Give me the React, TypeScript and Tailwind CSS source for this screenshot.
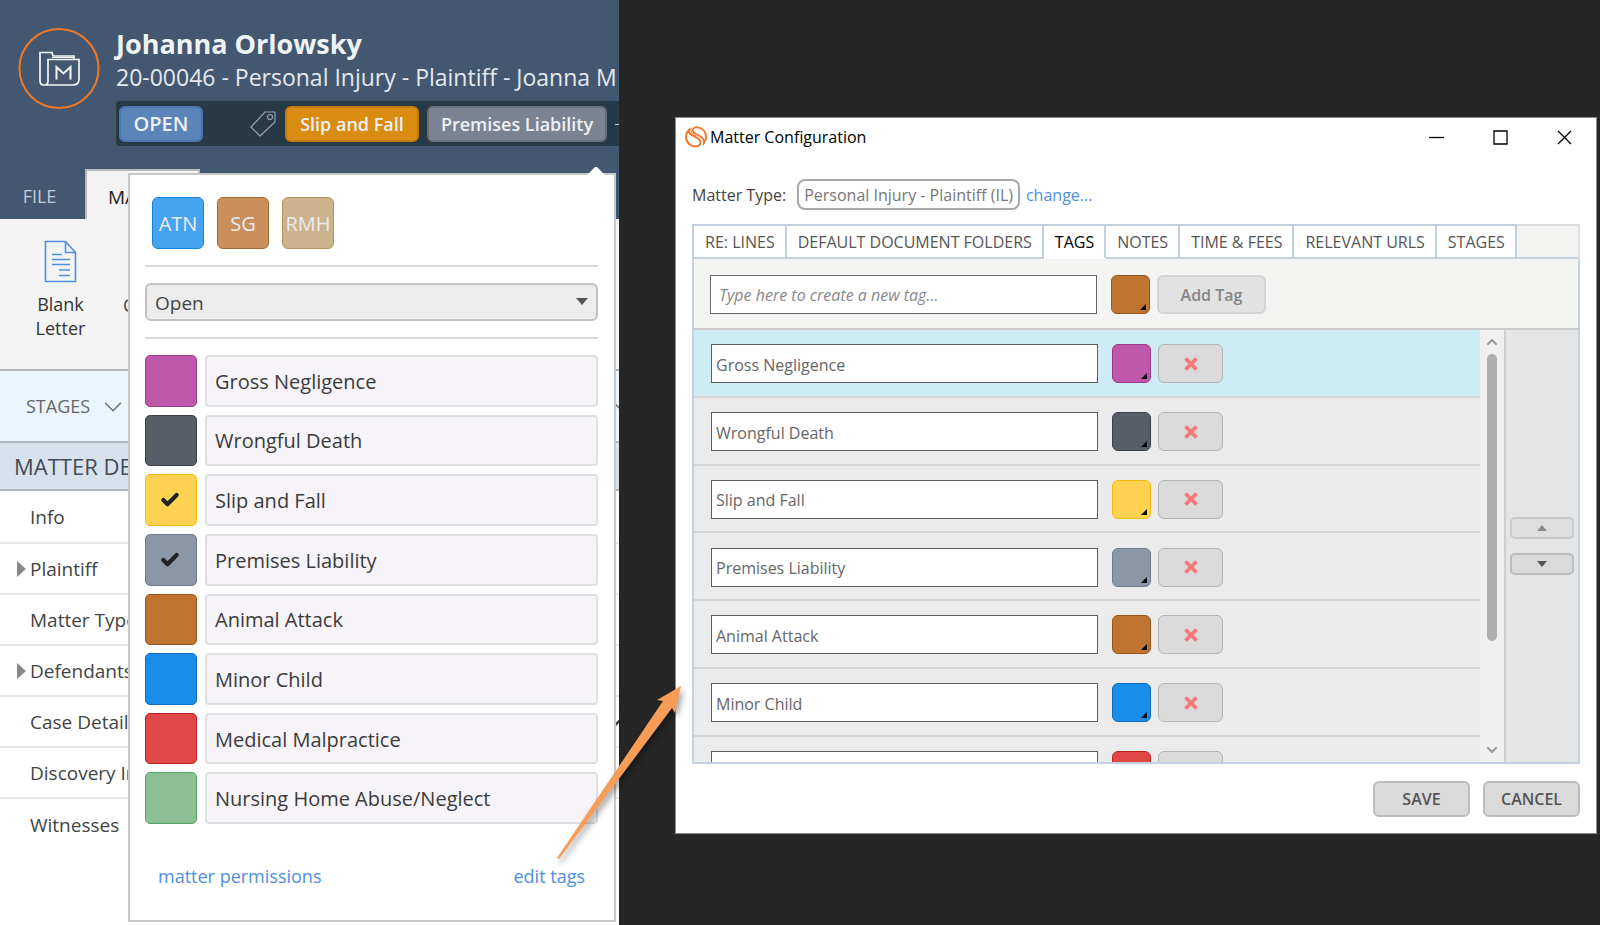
import { useState } from "react";
import { Check, ChevronDown, ChevronUp, X } from "lucide-react";
import clsx from "clsx";

interface Tag {
  name: string;
  swatch: string;
  outline: string;
  checked: boolean;
}

interface Detail {
  label: string;
  nested?: boolean;
  expanded?: boolean;
}

const initialTags: Tag[] = [
  { name: "Gross Negligence", swatch: "bg-[#bf57ab]", outline: "border-[#9c3a8a]", checked: false },
  { name: "Wrongful Death", swatch: "bg-[#575e68]", outline: "border-[#3c424b]", checked: false },
  { name: "Slip and Fall", swatch: "bg-[#ffd351]", outline: "border-[#f5b80c]", checked: true },
  { name: "Premises Liability", swatch: "bg-[#8b96a7]", outline: "border-[#6f7c90]", checked: true },
  { name: "Animal Attack", swatch: "bg-[#bf7432]", outline: "border-[#96551b]", checked: false },
  { name: "Minor Child", swatch: "bg-[#1a8de8]", outline: "border-[#0a6cbd]", checked: false },
  { name: "Medical Malpractice", swatch: "bg-[#e04848]", outline: "border-[#bb2222]", checked: false },
  { name: "Nursing Home Abuse/Neglect", swatch: "bg-[#8bbf94]", outline: "border-[#56a565]", checked: false },
];

const people = [
  { initials: "ATN", style: "bg-[#45a4f1] border-[#1783d8]" },
  { initials: "SG", style: "bg-[#cb8f5b] border-[#a9682f]" },
  { initials: "RMH", style: "bg-[#cdb38d] border-[#b5935a]" },
];

const details: Detail[] = [
  { label: "Info" },
  { label: "Plaintiff", nested: true },
  { label: "Matter Type" },
  { label: "Defendants", nested: true },
  { label: "Case Details", expanded: true },
  { label: "Discovery Info" },
  { label: "Witnesses" },
];

const tabs = ["RE: LINES", "DEFAULT DOCUMENT FOLDERS", "TAGS", "NOTES", "TIME & FEES", "RELEVANT URLS", "STAGES"];

function MatterIcon() {
  return (
    <svg width="82" height="82" viewBox="0 0 82 82" fill="none" className="shrink-0" aria-hidden="true">
      <circle cx="41" cy="41.500" r="39.500" stroke="#f37721" strokeWidth="2" />
      <g stroke="#f2f5f8" strokeWidth="1.700">
        <path d="M26 58c-2.500 0-4-1.500-4-4V25.500h12l1 3.500h21v3" />
        <path d="M34 30.500h22" strokeWidth="1" />
        <path d="M30 54c0 2.500-1.500 4-4 4h29c4 0 6-2 6-6V32.500H30z" />
        <path d="M38.500 52.500V40l7 6.500 7-6.500v12.500" strokeWidth="2" />
      </g>
    </svg>
  );
}

function TagIcon() {
  return (
    <svg width="28" height="28" viewBox="0 0 28 28" fill="none" stroke="#93a2b0" strokeWidth="1.200" className="shrink-0" aria-hidden="true">
      <path d="M16 2h10v10L11 26l-9-9z" strokeLinejoin="round" />
      <circle cx="21" cy="7" r="2.500" />
    </svg>
  );
}

function LetterIcon() {
  return (
    <svg width="34" height="44" viewBox="0 0 34 44" fill="none" stroke="#4b90e2" strokeWidth="1.600" aria-hidden="true">
      <path d="M1.500 1.500h20l10 11v29h-30z" />
      <path d="M21.500 1.500v11h10" />
      <path d="M8 14.500h10M8 19.500h18M8 24.500h18M15 30h11M15 35.500h11" />
    </svg>
  );
}

function BrandIcon() {
  return (
    <svg width="22" height="22" viewBox="0 0 22 22" fill="none" stroke="#f0772b" strokeWidth="1.900" strokeLinecap="round" aria-hidden="true">
      <path d="M4 4C0 8 0 14 4 18c3 3 8.500 3 10.500 1s1-5-2-7C8.500 10 3 8.500 4 4z" />
      <path d="M19 17c3-4 2.500-9.500-.5-13C15 1 10 .5 8.500 2.500S8 6.500 11 8c4 2 8.500 4 8 9z" />
      <path d="M6 2.500c-.5 4 1.500 5.500 5 7.500" strokeWidth="1" />
    </svg>
  );
}

function Header() {
  return (
    <header className="bg-[#435870]">
      <div className="flex gap-4 pt-[27px] pl-[18px] h-[146px]">
        <MatterIcon />
        <div className="flex-1 min-w-0">
          <h1 className="text-[27px] leading-[33px] font-bold text-[#f0f3f6]">Johanna Orlowsky</h1>
          <p className="text-[23px] leading-[34px] text-[#e3e9ef] whitespace-nowrap mb-[7px]">
            20-00046 - Personal Injury - Plaintiff - Joanna M
          </p>
          <div className="flex items-center gap-2 h-[45px] pl-[3px] rounded-l bg-[#273946] text-[18px] leading-6 font-semibold text-[#eef1f4] whitespace-nowrap overflow-hidden">
            <button className="h-9 w-[84px] shrink-0 rounded-md border-2 border-[#4a74ae] bg-[#5b84b9] text-[20px]">OPEN</button>
            <div className="ml-auto" />
            <TagIcon />
            <button className="h-9 w-[134px] shrink-0 pt-px rounded-md border-2 border-[#c27c0c] bg-[#d98c10]">Slip and Fall</button>
            <button className="h-9 w-[180px] shrink-0 pt-px rounded-md border-2 border-[#666e7e] bg-[#7b8392]">Premises Liability</button>
            <button aria-label="Add tag" className="w-1 shrink-0 overflow-hidden">
              <svg width="12" height="12" viewBox="0 0 12 12" stroke="#c5ced6" aria-hidden="true">
                <path d="M0 6.500h12M6 0v12" />
              </svg>
            </button>
          </div>
        </div>
      </div>
      <nav className="flex items-end h-[73px] text-[19px]">
        <button className="w-[85px] h-[50px] pr-[6px] pt-1 text-[18px] text-[#c3cdd7]">FILE</button>
        <button className="w-[115px] h-[50px] pl-[21px] pt-1 text-left border-2 border-b-0 border-[#b9b9b9] bg-[#f4f4f4] text-[#222]">
          MATTER
        </button>
      </nav>
    </header>
  );
}

function Sidebar() {
  return (
    <div className="text-[#444]">
      <div className="flex items-start h-[152px] pt-[21px] bg-[#f4f4f4] border-b-2 border-[#b4b8bb]">
        <button className="flex flex-col items-center w-[121px] text-[18px] leading-6 text-[#333]">
          <LetterIcon />
          <span className="w-16 mt-2">Blank Letter</span>
        </button>
        <span className="pt-[53px] pl-[2px] text-[18px] leading-6">Custom</span>
      </div>
      <button className="flex items-center gap-2 w-full h-[72px] pl-[26px] pt-px bg-[#eaf5ff] border-b-2 border-[#b0b8c0] text-[18px] text-[#666]">
        STAGES
        <ChevronDown size={30} strokeWidth={1} />
        <ChevronDown size={30} strokeWidth={1} className="ml-auto -mr-[18px] shrink-0" />
      </button>
      <h2 className="h-12 pl-[14px] leading-[46px] text-[22px] bg-[#d8e2ec] border-b-2 border-[#adb4ba] text-[#434b54] whitespace-nowrap">
        MATTER DETAILS
      </h2>
      <ul className="text-[19px]">
        {details.map((item) => (
          <li
            key={item.label}
            className="flex items-center h-[51px] first:h-[53px] pl-[17px] pt-px border-b-2 border-[#e6e6e6] last:border-b-0"
          >
            <span className="w-[13px]">
              {item.nested && (
                <svg width="9" height="16" viewBox="0 0 9 16" fill="#888" aria-hidden="true">
                  <path d="M0 0l9 8-9 8z" />
                </svg>
              )}
            </span>
            {item.label}
            {item.expanded && <ChevronUp size={30} strokeWidth={2} className="ml-auto -mr-[18px] shrink-0" />}
          </li>
        ))}
      </ul>
    </div>
  );
}

function TagPopover({ tags, onToggle }: { tags: Tag[]; onToggle: (name: string) => void }) {
  return (
    <div className="absolute top-[173px] left-[128px] right-[3px] pl-[15px] pr-4 pt-[22px] pb-[30px] bg-white border-2 border-[#c9c9c9]">
      <svg className="absolute -top-[9px] right-[9px]" width="18" height="9" viewBox="0 0 18 9" fill="#fff" aria-hidden="true">
        <path d="M0 9l8-8h2l8 8z" />
      </svg>
      <div className="flex gap-[13px] pl-[7px] pb-4 border-b-2 border-[#d9d9d9]">
        {people.map((person) => (
          <button
            key={person.initials}
            className={clsx("size-[52px] pt-px rounded-md border text-[20px] text-[#e9edf0]", person.style)}
          >
            <span className="flex justify-center">{person.initials}</span>
          </button>
        ))}
      </div>
      <div className="relative py-4 border-b-2 border-[#d9d9d9]">
        <select
          aria-label="Matter status"
          className="block appearance-none w-full h-[38px] pl-2 pt-[2px] rounded-md border-2 border-[#c2c2c2] bg-[#ececec] text-[19px] leading-6 text-[#444]"
        >
          <option>Open</option>
          <option>Closed</option>
        </select>
        <svg className="absolute right-[10px] top-[31px]" width="12" height="7" viewBox="0 0 12 7" fill="#555" aria-hidden="true">
          <path d="M0 0h12L6 7z" />
        </svg>
      </div>
      <ul className="grid auto-rows-fr gap-2 h-[469px] mt-4">
        {tags.map((tag) => (
          <li key={tag.name}>
            <label className="flex gap-2 h-full">
              <span className={clsx("relative flex items-center justify-center w-[52px] rounded-[5px] border", tag.swatch, tag.outline)}>
                <input
                  type="checkbox"
                  checked={tag.checked}
                  onChange={() => onToggle(tag.name)}
                  className="absolute inset-0 opacity-0"
                />
                {tag.checked && <Check size={20} strokeWidth={5} className="mr-[2px] text-[#222]" />}
              </span>
              <span className="flex flex-1 items-center pl-2 pt-[2px] rounded border-2 border-[#e0e0e0] bg-[#f6f4f8] text-[20px] text-[#3b3b3b]">
                {tag.name}
              </span>
            </label>
          </li>
        ))}
      </ul>
      <div className="flex justify-between mt-[38px] px-[13px] text-[18px] leading-7 text-[#4b90e2]">
        <a href="#permissions">matter permissions</a>
        <a href="#tags">edit tags</a>
      </div>
    </div>
  );
}

function ColorButton({ label, style }: { label: string; style: string }) {
  return (
    <button aria-label={label} className={clsx("flex items-end justify-end size-[39px] p-[3px] rounded-md border", style)}>
      <svg width="6" height="6" viewBox="0 0 6 6" aria-hidden="true">
        <path d="M6 0v6H0z" />
      </svg>
    </button>
  );
}

function TagsTab({ tags }: { tags: Tag[] }) {
  const [draft, setDraft] = useState("");

  return (
    <div className="border-2 border-t-0 border-[#c3d0e0]">
      <div className="flex items-center h-[69px] pl-4 pt-[2px] bg-[#f4f4f2]">
        <input
          aria-label="New tag"
          value={draft}
          onChange={(e) => setDraft(e.target.value)}
          placeholder="Type here to create a new tag..."
          className="w-[387px] h-[39px] px-2 border border-[#666] bg-white text-[16px] text-[#444] placeholder:italic placeholder:text-[#888]"
        />
        <span className="ml-[14px] mr-[7px] flex">
          <ColorButton label="New tag colour" style="bg-[#bf7432] border-[#96551b]" />
        </span>
        <button className="w-[109px] h-[39px] rounded-md border-2 border-[#d3d3d3] bg-[#e2e2e2] text-[16px] font-semibold text-[#858585]">
          Add Tag
        </button>
      </div>
      <div className="flex h-[434px] border-t-2 border-[#cacaca]">
        <div className="flex-1 overflow-hidden bg-[#ebebeb]">
          <ul className="grid auto-rows-fr h-[542px]">
            {tags.map((tag, i) => (
              <li
                key={tag.name}
                className={clsx("flex items-center pl-[17px] pt-[2px] border-b-2 border-[#d6d6d6]", i === 0 && "bg-[#cdecf4]")}
              >
                <input
                  aria-label={`Tag ${i + 1}`}
                  defaultValue={tag.name}
                  className="w-[387px] h-[39px] px-1 pt-[2px] border border-[#5e5e5e] bg-white text-[16px] text-[#666]"
                />
                <span className="ml-[14px] mr-[7px] flex">
                  <ColorButton label={`${tag.name} colour`} style={clsx(tag.swatch, tag.outline)} />
                </span>
                <button
                  aria-label={`Delete ${tag.name}`}
                  className="flex items-center justify-center w-[65px] h-[39px] rounded-md border border-[#b5b5b5] bg-[#dadada] text-[#f87878]"
                >
                  <X size={22} strokeWidth={4} strokeLinecap="butt" />
                </button>
              </li>
            ))}
          </ul>
        </div>
        <div className="flex flex-col items-center w-6 py-1 bg-[#f0f0f0] text-[#999]">
          <ChevronUp size={16} strokeWidth={3} />
          <div className="w-[10px] h-[287px] mt-1 rounded-full bg-[#aeaeae]" />
          <ChevronDown size={16} strokeWidth={3} className="mt-auto" />
        </div>
        <div className="flex flex-col justify-center gap-[14px] w-[74px] px-1 border-l-2 border-[#cfcfcf] bg-[#e5e5e5]">
          <button aria-label="Move up" className="flex items-center justify-center h-[22px] rounded-[5px] border-2 border-[#cacaca] bg-[#dedede]">
            <svg width="10" height="6" viewBox="0 0 10 6" fill="#888" aria-hidden="true">
              <path d="M0 6h10L5 0z" />
            </svg>
          </button>
          <button aria-label="Move down" className="flex items-center justify-center h-[22px] rounded-[5px] border-2 border-[#bcbcbc] bg-[#dadada]">
            <svg width="10" height="6" viewBox="0 0 10 6" fill="#555" aria-hidden="true">
              <path d="M0 0h10L5 6z" />
            </svg>
          </button>
        </div>
      </div>
    </div>
  );
}

function ConfigDialog({ tags }: { tags: Tag[] }) {
  return (
    <section role="dialog" aria-label="Matter Configuration" className="bg-white border border-[#8a8a8a] pb-4">
      <div className="flex items-center h-[38px] pl-[9px] pr-6 text-black">
        <BrandIcon />
        <h2 className="flex-1 ml-[3px] text-[16px]">Matter Configuration</h2>
        <div className="flex gap-[49px]">
          <button aria-label="Minimize">
            <svg width="15" height="15" viewBox="0 0 15 15" stroke="#000" strokeWidth="1.300"><path d="M0 7.500h15" /></svg>
          </button>
          <button aria-label="Maximize">
            <svg width="15" height="15" viewBox="0 0 15 15" fill="none" stroke="#000" strokeWidth="1.300"><path d="M1 1h13v13H1z" /></svg>
          </button>
          <button aria-label="Close">
            <svg width="15" height="15" viewBox="0 0 15 15" stroke="#000" strokeWidth="1.300"><path d="M1 1l13 13M14 1L1 14" /></svg>
          </button>
        </div>
      </div>
      <div className="px-4">
        <div className="flex items-center mt-[23px] text-[16px] text-[#444]">
          Matter Type:
          <span className="ml-[11px] mr-[6px] px-[5px] h-[31px] leading-7 rounded-lg border-2 border-[#a8a8a8] text-[#777]">
            Personal Injury - Plaintiff (IL)
          </span>
          <a href="#change" className="text-[#4b90e2]">change...</a>
        </div>
        <div role="tablist" className="flex h-[35px] mt-[14px] bg-[#f4f4f2] border-r-2 border-t-2 border-[#dedede]">
          {tabs.map((tab) => (
            <button
              key={tab}
              role="tab"
              aria-selected={tab === "TAGS"}
              className={clsx(
                "-mt-[2px] pl-[11px] pr-[10px] border-2 border-l-0 border-[#c3d0e0] first:border-l-2 bg-white text-[16px] whitespace-nowrap",
                tab === "TAGS" ? "border-b-white text-black" : "text-[#555]"
              )}
            >
              {tab}
            </button>
          ))}
          <div className="flex-1 border-b-2 border-[#c3d0e0]" />
        </div>
        <TagsTab tags={tags} />
        <div className="flex justify-end gap-[13px] mt-[17px] text-[16px] font-semibold text-[#555]">
          <button className="w-[97px] h-9 rounded-md border-2 border-[#bcbcbc] bg-[#dadada]">SAVE</button>
          <button className="w-[97px] h-9 rounded-md border-2 border-[#bcbcbc] bg-[#dadada]">CANCEL</button>
        </div>
      </div>
    </section>
  );
}

export default function App() {
  const [tags, setTags] = useState(initialTags);

  const toggleTag = (name: string) => {
    setTags(tags.map((tag) => (tag.name === name ? { ...tag, checked: !tag.checked } : tag)));
  };

  return (
    <div className="relative grid grid-cols-[619fr_981fr] min-h-screen overflow-hidden bg-[#262626] font-['Open_Sans',sans-serif]">
      <main className="relative min-w-0 overflow-hidden bg-white">
        <Header />
        <Sidebar />
        <TagPopover tags={tags} onToggle={toggleTag} />
      </main>
      <div className="min-w-0 pt-[117px] pl-14 pr-[3px]">
        <ConfigDialog tags={tags} />
      </div>

      {/* Callout arrow from "edit tags" to the dialog */}
      <svg
        className="absolute left-[550px] top-[680px] drop-shadow-[2px_4px_3px_rgba(0,0,0,0.4)]"
        width="140"
        height="185"
        viewBox="550 680 140 185"
        fill="#f79d57"
        aria-hidden="true"
      >
        <path d="M681 686l-24 14 6 1-106 157 2 1 113-151 3 5z" />
      </svg>
    </div>
  );
}
